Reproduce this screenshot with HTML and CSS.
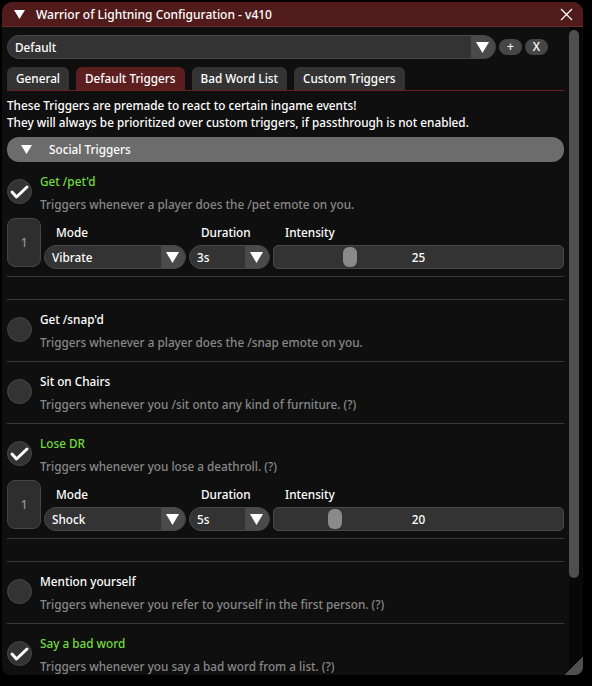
FILE: index.html
```html
<!DOCTYPE html>
<html>
<head>
<meta charset="utf-8">
<link rel="stylesheet" href="styles.css">
</head>
<body>
<div class="window">
  <div class="titlebar">
    <svg class="tri" width="11" height="9" viewBox="0 0 11 9"><polygon points="0,0 11,0 5.5,9" fill="#fff"/></svg>
    <span class="title">Warrior of Lightning Configuration - v410</span>
    <svg class="close" width="13" height="13" viewBox="0 0 13 13"><path d="M1 1 L12 12 M12 1 L1 12" stroke="#fff" stroke-width="1.3" fill="none"/></svg>
  </div>
  <div class="body">
    <div class="content">
      <div class="profile-row">
        <div class="combo profile">
          <span class="combo-text">Default</span>
          <span class="combo-arrow"><svg width="13" height="11" viewBox="0 0 13 11"><polygon points="0,0 13,0 6.5,11" fill="#fff"/></svg></span>
        </div>
        <div class="small-btn">+</div>
        <div class="small-btn">X</div>
      </div>
      <div class="tabs">
        <div class="tab">General</div>
        <div class="tab active">Default Triggers</div>
        <div class="tab">Bad Word List</div>
        <div class="tab">Custom Triggers</div>
      </div>
      <p class="intro">These Triggers are premade to react to certain ingame events!<br>They will always be prioritized over custom triggers, if passthrough is not enabled.</p>
      <div class="header">
        <svg class="tri" width="11" height="9" viewBox="0 0 11 9"><polygon points="0,0 11,0 5.5,9" fill="#fff"/></svg>
        <span>Social Triggers</span>
      </div>

      <div class="trigger first expanded">
        <div class="trigger-main">
          <div class="check on"><svg width="25" height="25" viewBox="0 0 25 25"><polyline points="5,13 9.5,18 20,8" fill="none" stroke="#fff" stroke-width="3" stroke-linecap="round" stroke-linejoin="round"/></svg></div>
          <div class="info">
            <div class="t-title green">Get /pet'd</div>
            <div class="t-desc">Triggers whenever a player does the /pet emote on you.</div>
          </div>
        </div>
        <div class="settings">
          <div class="num">1</div>
          <div class="field mode">
            <div class="label">Mode</div>
            <div class="combo"><span class="combo-text">Vibrate</span><span class="combo-arrow"><svg width="13" height="11" viewBox="0 0 13 11"><polygon points="0,0 13,0 6.5,11" fill="#fff"/></svg></span></div>
          </div>
          <div class="field dur">
            <div class="label">Duration</div>
            <div class="combo"><span class="combo-text">3s</span><span class="combo-arrow"><svg width="13" height="11" viewBox="0 0 13 11"><polygon points="0,0 13,0 6.5,11" fill="#fff"/></svg></span></div>
          </div>
          <div class="field int">
            <div class="label">Intensity</div>
            <div class="slider"><span class="grab" style="--v:0.25"></span><span class="slider-val">25</span></div>
          </div>
        </div>
      </div>
      <div class="spacer"></div>

      <div class="trigger">
        <div class="trigger-main">
          <div class="check"></div>
          <div class="info">
            <div class="t-title">Get /snap'd</div>
            <div class="t-desc">Triggers whenever a player does the /snap emote on you.</div>
          </div>
        </div>
      </div>

      <div class="trigger">
        <div class="trigger-main">
          <div class="check"></div>
          <div class="info">
            <div class="t-title">Sit on Chairs</div>
            <div class="t-desc">Triggers whenever you /sit onto any kind of furniture. (?)</div>
          </div>
        </div>
      </div>

      <div class="trigger expanded">
        <div class="trigger-main">
          <div class="check on"><svg width="25" height="25" viewBox="0 0 25 25"><polyline points="5,13 9.5,18 20,8" fill="none" stroke="#fff" stroke-width="3" stroke-linecap="round" stroke-linejoin="round"/></svg></div>
          <div class="info">
            <div class="t-title green">Lose DR</div>
            <div class="t-desc">Triggers whenever you lose a deathroll. (?)</div>
          </div>
        </div>
        <div class="settings">
          <div class="num">1</div>
          <div class="field mode">
            <div class="label">Mode</div>
            <div class="combo"><span class="combo-text">Shock</span><span class="combo-arrow"><svg width="13" height="11" viewBox="0 0 13 11"><polygon points="0,0 13,0 6.5,11" fill="#fff"/></svg></span></div>
          </div>
          <div class="field dur">
            <div class="label">Duration</div>
            <div class="combo"><span class="combo-text">5s</span><span class="combo-arrow"><svg width="13" height="11" viewBox="0 0 13 11"><polygon points="0,0 13,0 6.5,11" fill="#fff"/></svg></span></div>
          </div>
          <div class="field int">
            <div class="label">Intensity</div>
            <div class="slider"><span class="grab" style="--v:0.195"></span><span class="slider-val">20</span></div>
          </div>
        </div>
      </div>
      <div class="spacer"></div>

      <div class="trigger">
        <div class="trigger-main">
          <div class="check"></div>
          <div class="info">
            <div class="t-title">Mention yourself</div>
            <div class="t-desc">Triggers whenever you refer to yourself in the first person. (?)</div>
          </div>
        </div>
      </div>

      <div class="trigger">
        <div class="trigger-main">
          <div class="check on"><svg width="25" height="25" viewBox="0 0 25 25"><polyline points="5,13 9.5,18 20,8" fill="none" stroke="#fff" stroke-width="3" stroke-linecap="round" stroke-linejoin="round"/></svg></div>
          <div class="info">
            <div class="t-title green">Say a bad word</div>
            <div class="t-desc">Triggers whenever you say a bad word from a list. (?)</div>
          </div>
        </div>
      </div>
    </div>
    <div class="scrollbar"><div class="thumb"></div></div>
  </div>
  <div class="grip"></div>
</div>
</body>
</html>
```

FILE: styles.css
```css
* { box-sizing: border-box; }
html, body { margin: 0; padding: 0; background: #000; }
body {
  font-family: "Noto Sans", "Open Sans", sans-serif;
  font-weight: 500;
  font-size: 11.75px;
  line-height: 17px;
  color: #fff;
}
.window {
  position: relative;
  margin: 2px 0 0 2px;
  width: 581px;
  height: 673px;
  background: #0f0f0f;
  border-radius: 10px 10px 8px 8px;
  overflow: hidden;
  display: flex;
  flex-direction: column;
}
.titlebar {
  height: 25px;
  flex: none;
  background: #521b1b;
  border-bottom: 1px solid #6c2a2a;
  display: flex;
  align-items: center;
  padding: 0 0 0 12px;
}
.titlebar .tri { margin-right: 11px; margin-top: 1px; }
.titlebar .title { flex: 1; font-size: 12px; }
.titlebar .close { margin-right: 10px; }
.body {
  flex: 1;
  display: flex;
  min-height: 0;
}
.content {
  flex: 1;
  padding: 8px 5px 0 5px;
  overflow: hidden;
}
.scrollbar {
  width: 14px;
  flex: none;
  background: #080808;
  padding: 3px 4px 97px 0;
}
.thumb {
  width: 10px;
  height: 100%;
  border-radius: 5px;
  background: #4f4f4f;
}
.grip {
  position: absolute;
  right: 0;
  bottom: 0;
  width: 18px;
  height: 18px;
  background: linear-gradient(135deg, transparent 50%, #505050 50%);
}
.profile-row {
  display: flex;
  align-items: center;
  gap: 3px;
}
.combo {
  height: 24px;
  background: #333;
  border: 1px solid #484848;
  border-radius: 12px;
  display: flex;
  align-items: center;
  overflow: hidden;
}
.combo.profile { flex: none; width: 489px; }
.combo-text { flex: 1; padding-left: 7px; white-space: nowrap; }
.combo-arrow {
  width: 24px;
  align-self: stretch;
  background: #4a4a4a;
  display: flex;
  align-items: center;
  justify-content: center;
  padding-right: 2px;
}
.small-btn {
  width: 23px;
  height: 16px;
  border-radius: 8px;
  background: #464646;
  display: flex;
  align-items: center;
  justify-content: center;
  font-size: 12px;
  line-height: 16px;
}
.tabs {
  margin-top: 8px;
  display: flex;
  gap: 7px;
  border-bottom: 1px solid #6b2020;
  height: 24px;
}
.tab {
  height: 23px;
  padding: 0 9px;
  background: #333;
  border-radius: 6px 6px 0 0;
  display: flex;
  align-items: center;
}
.tab.active { background: #5c1e1e; }
.intro { margin: 6px 0 0 0; }
.header {
  margin-top: 6px;
  height: 25px;
  background: #6c6c6c;
  border-radius: 12px;
  display: flex;
  align-items: center;
  padding-left: 14px;
}
.header .tri { margin-right: 17px; }
.trigger {
  border-top: 1px solid #383841;
  padding: 11px 0 10px 0;
}
.trigger.first { border-top: none; }
.trigger.expanded { padding-bottom: 7px; }
.trigger-main {
  display: flex;
  gap: 8px;
  align-items: flex-start;
}
.check {
  width: 25px;
  height: 25px;
  margin-top: 6px;
  border-radius: 50%;
  background: #333;
  border: 1px solid #464646;
  display: flex;
  align-items: center;
  justify-content: center;
  flex: none;
}
.check svg { margin: -1px; }
.info { display: flex; flex-direction: column; gap: 6px; }
.t-title { white-space: nowrap; }
.t-title.green { color: #72dc3e; }
.t-desc { color: #888; white-space: nowrap; }
.settings {
  margin-top: 5px;
  display: flex;
  gap: 3px;
  align-items: flex-start;
}
.num {
  width: 34px;
  height: 49px;
  background: #2e2e2e;
  border: 1px solid #454545;
  border-radius: 8px;
  color: #959595;
  display: flex;
  align-items: center;
  justify-content: center;
  flex: none;
}
.field {
  display: flex;
  flex-direction: column;
  gap: 4px;
  padding-top: 6px;
}
.field.mode { width: 142px; flex: none; }
.field.dur { width: 81px; flex: none; }
.field.int { flex: 1; }
.label { padding-left: 12px; }
.slider {
  position: relative;
  height: 24px;
  background: #333;
  border: 1px solid #484848;
  border-radius: 5px 5px 5px 5px;
  display: flex;
  align-items: center;
  justify-content: center;
}
.grab {
  position: absolute;
  top: 1px;
  left: calc(1px + (100% - 16px) * var(--v));
  width: 14px;
  height: 20px;
  border-radius: 6px;
  background: #8a8a8a;
}
.slider-val { position: relative; }
.spacer {
  border-top: 1px solid #383841;
  height: 23px;
}
```
